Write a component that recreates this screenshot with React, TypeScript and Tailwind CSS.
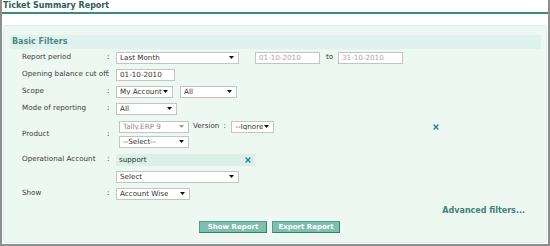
import type { ReactNode } from 'react';

const font = { fontFamily: '"DejaVu Sans", Verdana, sans-serif' };

function Arrow({ muted = false }: { muted?: boolean }) {
  return (
    <svg width="5" height="3" viewBox="0 0 5 3" className="shrink-0">
      <path d="M0 0 L5 0 L2.5 3 Z" fill={muted ? '#9a9a9a' : '#111'} />
    </svg>
  );
}

function Select({ value, width, muted = false }: { value: string; width: string; muted?: boolean }) {
  return (
    <div
      className={`flex h-[12px] items-center justify-between gap-[1px] overflow-hidden border border-[#c4c4c4] bg-white pl-[3px] pr-[4px] ${width}`}
    >
      <span className={`overflow-hidden whitespace-nowrap leading-none ${muted ? 'text-[#8a8a8a]' : 'text-[#333]'}`}>
        {value}
      </span>
      <Arrow muted={muted} />
    </div>
  );
}

function Input({ value, width, disabled = false }: { value: string; width: string; disabled?: boolean }) {
  return (
    <div className={`flex h-[12px] items-center border border-[#c4c4c4] bg-white pl-[3px] ${width}`}>
      <span className={`whitespace-nowrap leading-none ${disabled ? 'text-[#a8a8a8]' : 'text-[#333]'}`}>{value}</span>
    </div>
  );
}

function Cross() {
  return (
    <svg width="6" height="6" viewBox="0 0 6 6" className="shrink-0">
      <path d="M0.6 0.6 L5.4 5.4 M5.4 0.6 L0.6 5.4" stroke="#2a8b8c" strokeWidth="1.4" />
    </svg>
  );
}

function Row({ label, height, children }: { label: string; height: string; children: ReactNode }) {
  return (
    <div className={`flex items-center ${height}`}>
      <div className="w-[97px] whitespace-nowrap pl-[12px] text-[#3a3a3a]">{label}</div>
      <div className="w-[9px] text-[#3a3a3a]">{label ? ':' : ''}</div>
      <div className="flex items-center">{children}</div>
    </div>
  );
}

export default function App() {
  return (
    <div
      style={font}
      className="flex h-[246px] w-[550px] flex-col border-x-2 border-b-2 border-[#8e8e8e] bg-white text-[7.2px]"
    >
      <div className="flex h-[14px] items-center border-b-2 border-[#3d8c7b] pl-[1px]">
        <span className="text-[8px] font-bold leading-none text-[#2d5f56]">Ticket Summary Report</span>
      </div>

      <div className="mx-[1px] mb-[1px] mt-[11px] flex flex-1 flex-col rounded-[3px] border border-[#d3efee] bg-[#eef8f2] pl-[6px] pr-[5px] pt-[9px]">
        <div className="flex h-[14px] items-center bg-[#e0f2ee] pl-[2px]">
          <span className="text-[8px] font-bold leading-none text-[#4a8b82]">Basic Filters</span>
        </div>

        <Row label="Report period" height="h-[17px]">
          <Select value="Last Month" width="w-[123px]" />
          <div className="ml-[16px]">
            <Input value="01-10-2010" width="w-[65px]" disabled />
          </div>
          <span className="ml-[6px] w-[12px] text-[#333]">to</span>
          <Input value="31-10-2010" width="w-[65px]" disabled />
        </Row>

        <Row label="Opening balance cut off" height="h-[17px]">
          <Input value="01-10-2010" width="w-[59px]" />
        </Row>

        <Row label="Scope" height="h-[17px]">
          <Select value="My Account" width="w-[57px]" />
          <div className="ml-[7px]">
            <Select value="All" width="w-[57px]" />
          </div>
        </Row>

        <Row label="Mode of reporting" height="h-[17px]">
          <Select value="All" width="w-[61px]" />
        </Row>

        <Row label="Product" height="h-[34px]">
          <div className="flex flex-col gap-[3px] pl-[3px]">
            <div className="flex items-center">
              <Select value="Tally.ERP 9" width="w-[70px]" muted />
              <span className="ml-[4px] text-[#3a3a3a]">Version</span>
              <span className="ml-[4px] w-[8px] text-[#3a3a3a]">:</span>
              <Select value="--Ignore--" width="w-[43px]" />
              <div className="ml-[159px]">
                <Cross />
              </div>
            </div>
            <Select value="--Select--" width="w-[70px]" />
          </div>
        </Row>

        <Row label="Operational Account" height="h-[17px]">
          <div className="flex h-[12px] w-[139px] items-center justify-between bg-[#dcf0ea] pl-[3px] pr-[4px]">
            <span className="leading-none text-[#333]">support</span>
            <Cross />
          </div>
        </Row>

        <Row label="" height="h-[17px]">
          <Select value="Select" width="w-[123px]" />
        </Row>

        <Row label="Show" height="h-[17px]">
          <Select value="Account Wise" width="w-[74px]" />
        </Row>

        <div className="flex h-[18px] items-center justify-end pr-[16px]">
          <span className="text-[8px] font-bold leading-none text-[#3f8079]">Advanced filters...</span>
        </div>

        <div className="mt-[1px] flex gap-[5px] pl-[189px]">
          <button className="flex h-[12px] w-[68px] items-center justify-center border border-[#5a9c8b] border-b-[#3f7a6c] border-r-[#3f7a6c] bg-[#7dc0ad] text-[7px] font-bold leading-none text-white">
            Show Report
          </button>
          <button className="flex h-[12px] w-[68px] items-center justify-center border border-[#5a9c8b] border-b-[#3f7a6c] border-r-[#3f7a6c] bg-[#7dc0ad] text-[7px] font-bold leading-none text-white">
            Export Report
          </button>
        </div>
      </div>
    </div>
  );
}
